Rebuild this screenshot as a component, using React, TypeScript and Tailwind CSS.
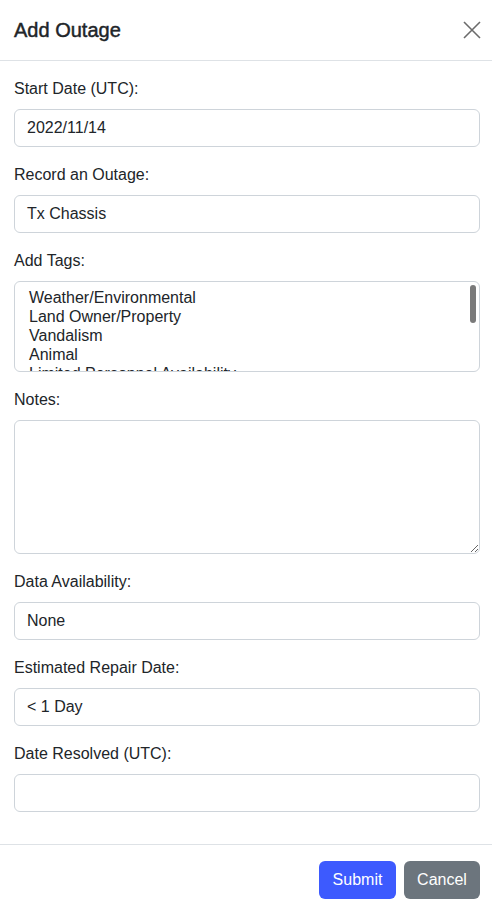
import React from "react";

const font = { fontFamily: '"Liberation Sans", Arial, sans-serif' };

function Field({ label, children }: { label: string; children: React.ReactNode }) {
  return (
    <div className="mb-4">
      <label className="block mb-2 text-[16px] leading-[24px] text-[#212529]">{label}</label>
      {children}
    </div>
  );
}

function Input({ value }: { value: string }) {
  return (
    <div className="h-[38px] w-full border border-[#ced4da] rounded-[6px] px-3 flex items-center text-[16px] text-[#212529] bg-white">
      {value}
    </div>
  );
}

export default function App() {
  const tags = [
    "Weather/Environmental",
    "Land Owner/Property",
    "Vandalism",
    "Animal",
    "Limited Personnel Availability",
  ];
  return (
    <div className="w-[492px] h-[905px] bg-white overflow-hidden" style={font}>
      <div className="h-[61px] border-b border-[#dee2e6] flex items-center justify-between pl-[14px] pr-[11px]">
        <h5 className="text-[20px] font-normal text-[#212529] leading-[30px] [-webkit-text-stroke:0.45px_#212529]">
          Add Outage
        </h5>
        <svg width="18" height="18" viewBox="0 0 18 18" className="mt-[-1px]">
          <path d="M1 1 L17 17 M17 1 L1 17" stroke="#6b6b6b" strokeWidth="1.6" fill="none" />
        </svg>
      </div>
      <div className="pl-[14px] pr-[12px] pt-4 pb-4">
        <Field label="Start Date (UTC):">
          <Input value="2022/11/14" />
        </Field>
        <Field label="Record an Outage:">
          <Input value="Tx Chassis" />
        </Field>
        <Field label="Add Tags:">
          <div className="relative h-[91px] w-full border border-[#ced4da] rounded-[6px] overflow-hidden bg-white">
            <div className="h-[89px] overflow-hidden pt-[6px] pl-[14px] text-[16px] leading-[19px] text-[#212529]">
              {tags.map((t) => (
                <div key={t}>{t}</div>
              ))}
            </div>
            <div className="absolute right-[3px] top-[3px] w-[6px] h-[38px] rounded-full bg-[#7a7a7a]" />
          </div>
        </Field>
        <Field label="Notes:">
          <textarea
            className="block h-[134px] w-full border border-[#ced4da] rounded-[6px] px-3 py-[6px] text-[16px] outline-none resize-y"
            style={font}
          />
        </Field>
        <Field label="Data Availability:">
          <Input value="None" />
        </Field>
        <Field label="Estimated Repair Date:">
          <Input value="< 1 Day" />
        </Field>
        <Field label="Date Resolved (UTC):">
          <Input value="" />
        </Field>
      </div>
      <div className="border-t border-[#dee2e6] flex justify-end gap-2 pt-4 pr-[12px]">
        <button className="h-[38px] w-[77px] rounded-[6px] bg-[#3d5afe] text-white text-[16px]" style={font}>
          Submit
        </button>
        <button className="h-[38px] w-[76px] rounded-[6px] bg-[#6c757d] text-white text-[16px]" style={font}>
          Cancel
        </button>
      </div>
    </div>
  );
}
